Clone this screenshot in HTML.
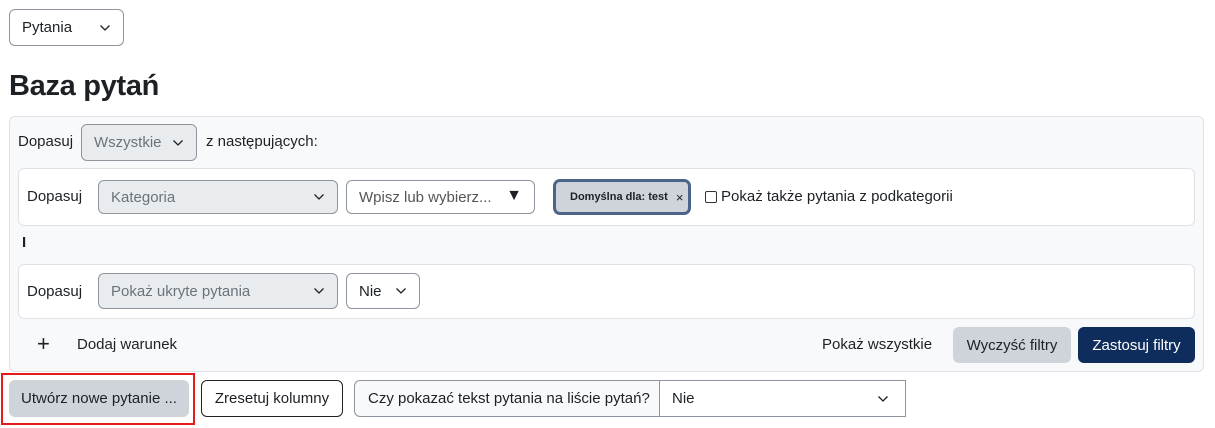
<!DOCTYPE html><html><head><meta charset="utf-8"><style>
*{box-sizing:border-box;margin:0;padding:0}
body{width:1215px;height:428px;background:#fff;font-family:"Liberation Sans",sans-serif;font-size:15px;color:#1d2125;position:relative;overflow:hidden}
.a{position:absolute}
.box{position:absolute;border:1px solid #8f959e;border-radius:6px;display:flex;align-items:center;padding-left:12px}
.dis{background:#e9ecef;border-color:#8f959e;color:#6a737b}
.chev{position:absolute;right:12px;top:50%;margin-top:-4px}
.t{position:absolute;line-height:18px}
</style></head><body>
<svg width="0" height="0" style="position:absolute"><symbol id="c" viewBox="0 0 12 8"><path d="M1.5 1.5 L6 6 L10.5 1.5" fill="none" stroke="#1d2125" stroke-width="1.3"/></symbol></svg>

<div class="box" style="left:9px;top:9px;width:115px;height:37px;border-color:#8f959e">Pytania<svg class="chev" width="12" height="8"><use href="#c"/></svg></div>
<div class="a" style="left:9px;top:70px;font-size:29px;font-weight:bold;letter-spacing:-0.3px">Baza pytań</div>

<div class="a" style="left:9px;top:116px;width:1195px;height:256px;background:#f8f9fa;border:1px solid #dee2e6;border-radius:6px"></div>
<div class="t" style="left:18px;top:133px">Dopasuj</div>
<div class="box dis" style="left:81px;top:124px;width:116px;height:37px">Wszystkie<svg class="chev" width="12" height="8"><use href="#c"/></svg></div>
<div class="t" style="left:206px;top:133px">z następujących:</div>

<div class="a" style="left:18px;top:168px;width:1177px;height:58px;background:#fff;border:1px solid #dee2e6;border-radius:6px"></div>
<div class="t" style="left:27px;top:188px">Dopasuj</div>
<div class="box dis" style="left:98px;top:180px;width:240px;height:34px">Kategoria<svg class="chev" width="12" height="8"><use href="#c"/></svg></div>
<div class="box" style="left:346px;top:180px;width:189px;height:34px;background:#fff;color:#555">Wpisz lub wybierz...<span class="a" style="right:12px;top:6px;color:#1d2125;font-size:16px">▼</span></div>
<div class="a" style="left:553px;top:179px;width:138px;height:36px;background:#ced4da;border:3px solid #4b6487;border-radius:7px;font-size:11px;font-weight:bold;display:flex;align-items:center;padding-left:14px">Domyślna dla: test <span style="margin-left:8px;font-weight:normal;font-size:13px">×</span></div>
<div class="a" style="left:705px;top:191px;width:12px;height:12px;border:1px solid #333;border-radius:2px;background:#fff"></div>
<div class="t" style="left:721px;top:188px">Pokaż także pytania z podkategorii</div>

<div class="t" style="left:22px;top:234px;font-weight:bold">I</div>

<div class="a" style="left:18px;top:264px;width:1177px;height:55px;background:#fff;border:1px solid #dee2e6;border-radius:6px"></div>
<div class="t" style="left:27px;top:283px">Dopasuj</div>
<div class="box dis" style="left:98px;top:273px;width:240px;height:36px">Pokaż ukryte pytania<svg class="chev" width="12" height="8"><use href="#c"/></svg></div>
<div class="box" style="left:346px;top:273px;width:74px;height:36px;background:#fff">Nie<svg class="chev" width="12" height="8"><use href="#c"/></svg></div>

<div class="t" style="left:37px;top:333px;font-size:22px;line-height:22px">+</div>
<div class="t" style="left:77px;top:336px">Dodaj warunek</div>
<div class="t" style="left:822px;top:336px">Pokaż wszystkie</div>
<div class="a" style="left:953px;top:327px;width:118px;height:36px;background:#ced4da;border-radius:6px;display:flex;align-items:center;justify-content:center">Wyczyść filtry</div>
<div class="a" style="left:1078px;top:327px;width:117px;height:36px;background:#0f2d5c;color:#fff;border-radius:6px;display:flex;align-items:center;justify-content:center">Zastosuj filtry</div>

<div class="a" style="left:1px;top:373px;width:194px;height:52px;border:2px solid #e31b1b"></div>
<div class="a" style="left:9px;top:380px;width:180px;height:37px;background:#ced4da;border-radius:6px;display:flex;align-items:center;justify-content:center">Utwórz nowe pytanie ...</div>
<div class="a" style="left:201px;top:380px;width:142px;height:37px;border:1px solid #1d2125;border-radius:6px;display:flex;align-items:center;justify-content:center">Zresetuj kolumny</div>
<div class="a" style="left:354px;top:380px;width:306px;height:37px;background:#f8f9fa;border:1px solid #8f959e;border-radius:6px 0 0 6px;display:flex;align-items:center;padding-left:13px">Czy pokazać tekst pytania na liście pytań?</div>
<div class="box" style="left:659px;top:380px;width:247px;height:37px;border-radius:0;background:#fff">Nie<svg class="chev" width="12" height="8" style="right:16px"><use href="#c"/></svg></div>
</body></html>
